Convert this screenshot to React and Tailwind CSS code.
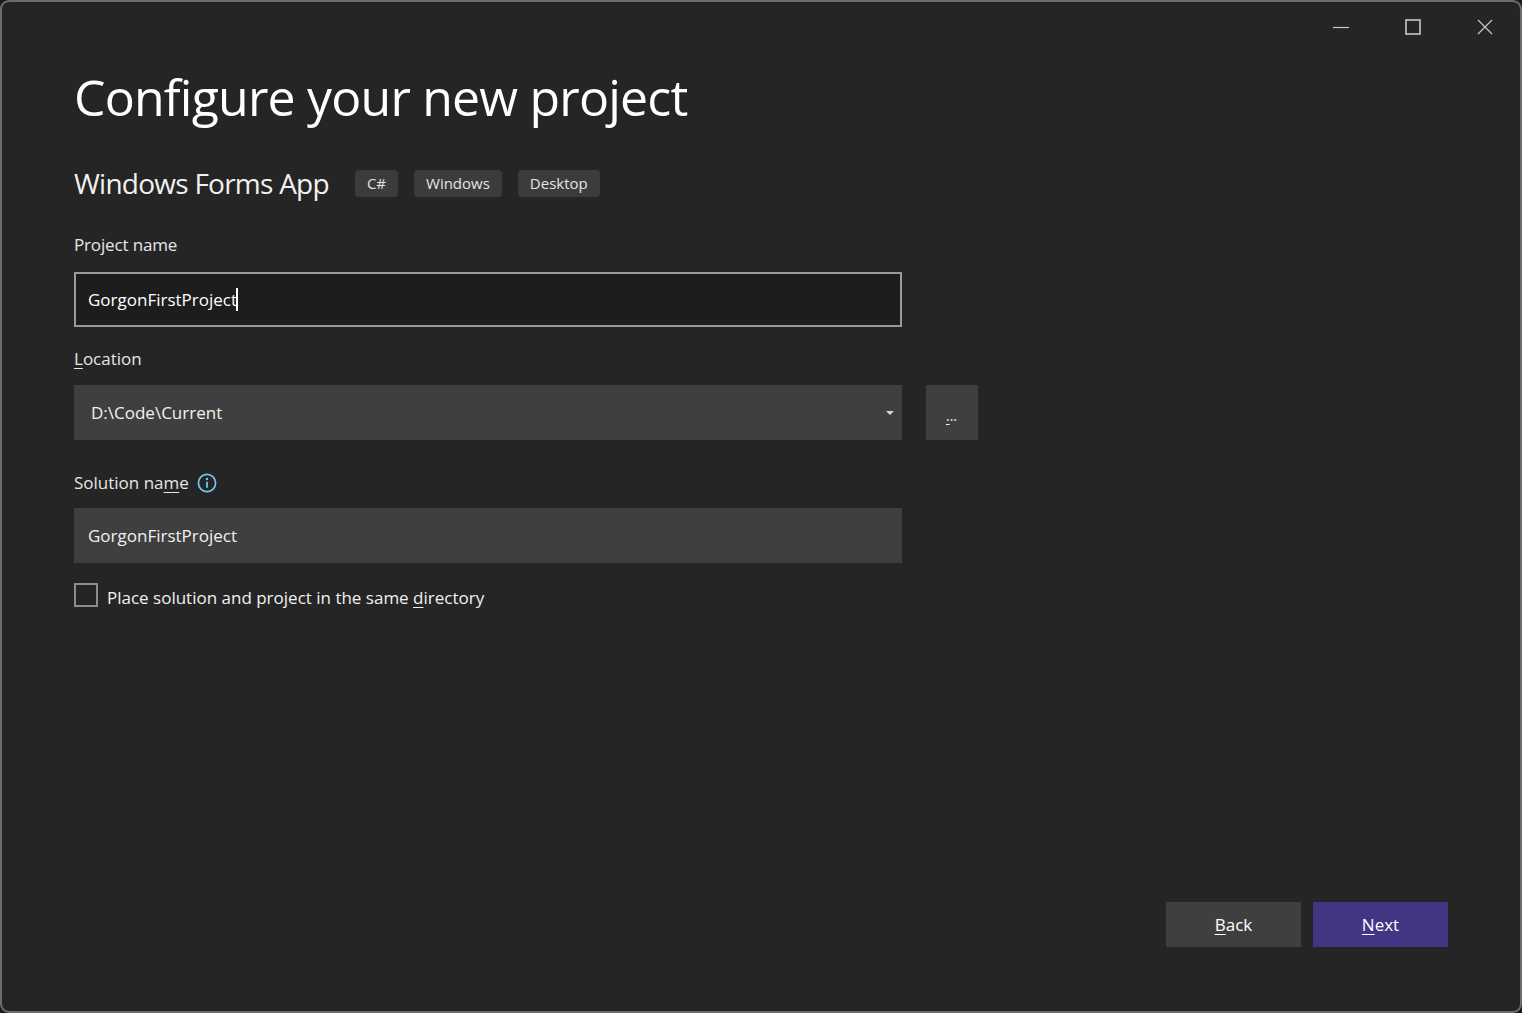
import React from 'react';

const Tag = ({ children }) => (
  <span className="h-[27px] px-3 flex items-center rounded bg-[#3c3c3c] text-[15px] text-[#e4e4e4]">
    {children}
  </span>
);

const Key = ({ children }) => (
  <span className="underline underline-offset-[3px] decoration-1">{children}</span>
);

const App = () => {
  return (
    <div className="w-[1522px] h-[1013px] bg-[#1b1b1b]">
      <div className="relative w-full h-full flex flex-col border-2 border-[#6d6d6d] rounded-[9px] bg-[#252525] text-[#f1f1f1] font-['Open_Sans',sans-serif] text-[17px]">
        {/* Window controls */}
        <div className="absolute top-0 right-[-1px] flex">
          <button className="w-[72px] h-[50px] flex items-center justify-center">
            <svg width="16" height="16" viewBox="0 0 16 16">
              <path d="M0 8.5h16" stroke="#c8c8c8" strokeWidth="1.2" />
            </svg>
          </button>
          <button className="w-[72px] h-[50px] flex items-center justify-center">
            <svg width="16" height="16" viewBox="0 0 16 16">
              <rect x="1" y="1" width="14" height="14" fill="none" stroke="#c8c8c8" strokeWidth="1.6" />
            </svg>
          </button>
          <button className="w-[72px] h-[50px] flex items-center justify-center">
            <svg width="16" height="16" viewBox="0 0 16 16">
              <path d="M1 1l14 14M15 1L1 15" stroke="#c8c8c8" strokeWidth="1.2" />
            </svg>
          </button>
        </div>

        <div className="flex-1 flex flex-col pl-[72px] pr-[72px]">
          <h1 className="mt-[58px] h-[74px] flex items-center text-[50px] leading-none tracking-[-0.8px] text-white">
            Configure your new project
          </h1>

          <div className="mt-[34px] h-[30px] flex items-center">
            <h2 className="text-[28px] leading-none tracking-[-0.75px] text-[#f1f1f1] mr-[26px]">Windows Forms App</h2>
            <div className="flex gap-4">
              <Tag>C#</Tag>
              <Tag>Windows</Tag>
              <Tag>Desktop</Tag>
            </div>
          </div>

          <label className="mt-[35px] h-[24px] leading-[24px] tracking-[-0.15px] text-[#e6e6e6]">Project name</label>
          <div className="mt-[15px] w-[828px] h-[55px] pl-3 flex items-center border-2 border-[#9a9a9a] bg-[#1d1d1d] text-white">
            <span>GorgonFirstProject</span>
            <span className="w-[2px] h-[23px] -ml-px bg-white" />
          </div>

          <label className="mt-[20px] h-[24px] leading-[24px] text-[#e6e6e6]"><Key>L</Key>ocation</label>
          <div className="mt-[14px] flex gap-6">
            <div className="relative w-[828px] h-[55px] pl-[17px] flex items-center bg-[#3f3f3f]">
              <span>D:\Code\Current</span>
              <span className="absolute right-[8px] top-[26px] w-0 h-0 border-x-[4.5px] border-x-transparent border-t-[4px] border-t-[#d8d8d8]" />
            </div>
            <button className="relative w-[52px] h-[55px] bg-[#3f3f3f]">
              <span className="absolute left-[20px] top-[24px] text-[14px] leading-none"><Key>.</Key>..</span>
            </button>
          </div>

          <div className="mt-[31px] h-[24px] flex items-center gap-2 text-[#e6e6e6]">
            <label>Solution na<Key>m</Key>e</label>
            <svg width="20" height="20" viewBox="0 0 20 20">
              <circle cx="10" cy="10" r="8.6" fill="none" stroke="#6fc8ee" strokeWidth="1.7" />
              <circle cx="10" cy="6" r="1.2" fill="#6fc8ee" />
              <path d="M10 8.8v6" stroke="#6fc8ee" strokeWidth="1.8" />
            </svg>
          </div>
          <div className="mt-[13px] w-[828px] h-[55px] pl-[14px] flex items-center bg-[#3f3f3f]">
            GorgonFirstProject
          </div>

          <div className="mt-[16px] flex items-center">
            <span className="w-[24px] h-[24px] border-2 border-[#8d8d8d]" />
            <span className="ml-[9px] mt-[6px]">Place solution and project in the same <Key>d</Key>irectory</span>
          </div>

          <div className="mt-auto mb-[64px] flex justify-end gap-3">
            <button className="w-[135px] h-[45px] bg-[#3f3f3f] text-white"><Key>B</Key>ack</button>
            <button className="w-[135px] h-[45px] bg-[#413584] text-white"><Key>N</Key>ext</button>
          </div>
        </div>
      </div>
    </div>
  );
};

export default App;
